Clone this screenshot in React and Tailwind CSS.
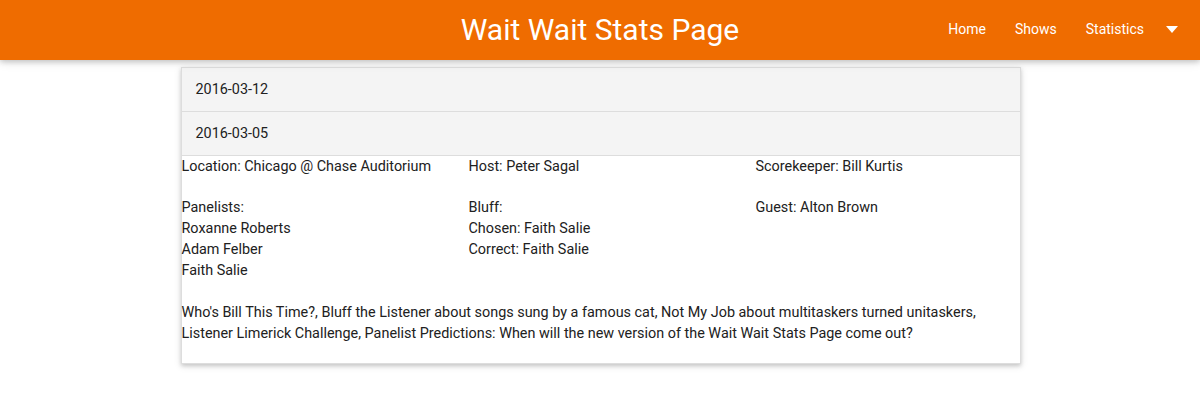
import React from "react";

export default function App() {
  return (
    <div className="min-h-[405px] bg-white" style={{ fontFamily: "Roboto, 'Liberation Sans', sans-serif" }}>
      <nav className="relative z-10 h-[60px] bg-[#ef6c00] text-white shadow-[0_2px_5px_0_rgba(0,0,0,0.16),0_2px_10px_0_rgba(0,0,0,0.12)]">
        <div className="absolute left-0 right-0 top-0 flex h-[59px] items-center justify-center">
          <span className="text-[30px] leading-none">Wait Wait Stats Page</span>
        </div>
        <ul className="absolute right-[8px] top-0 flex h-[58px] items-center text-[14px]">
          <li className="px-[14.5px]">Home</li>
          <li className="px-[14.5px]">Shows</li>
          <li className="px-[14.5px]">Statistics</li>
          <li className="pl-[7.5px] pr-[14px]">
            <svg width="12" height="8" viewBox="0 0 12 8" className="mt-[2px]">
              <path d="M0 0 L12 0 L6 7 Z" fill="white" />
            </svg>
          </li>
        </ul>
      </nav>
      <div className="flex justify-center pt-[7px] pl-[1px]">
        <div className="w-[840px] border border-[#ddd] text-[14.4px] leading-[21px] text-[#212121] shadow-[0_2px_4px_0_rgba(0,0,0,0.16),0_2px_8px_0_rgba(0,0,0,0.10)]">
          <div className="border-b border-[#ddd] bg-[#f4f4f4] px-[14px] py-[11px]">2016-03-12</div>
          <div className="border-b border-[#ddd] bg-[#f4f4f4] px-[14px] py-[11px]">2016-03-05</div>
          <div className="pb-[19px] pr-[10px]">
            <div className="grid grid-cols-[287px_287px_1fr]">
              <div>Location: Chicago @ Chase Auditorium</div>
              <div>Host: Peter Sagal</div>
              <div>Scorekeeper: Bill Kurtis</div>
            </div>
            <div className="mt-[20px] grid grid-cols-[287px_287px_1fr]">
              <div>
                <div>Panelists:</div>
                <div>Roxanne Roberts</div>
                <div>Adam Felber</div>
                <div>Faith Salie</div>
              </div>
              <div>
                <div>Bluff:</div>
                <div>Chosen: Faith Salie</div>
                <div>Correct: Faith Salie</div>
              </div>
              <div>Guest: Alton Brown</div>
            </div>
            <p className="mt-[21px]">
              Who's Bill This Time?, Bluff the Listener about songs sung by a famous cat, Not My Job about multitaskers turned unitaskers, Listener Limerick Challenge, Panelist Predictions: When will the new version of the Wait Wait Stats Page come out?
            </p>
          </div>
        </div>
      </div>
    </div>
  );
}
